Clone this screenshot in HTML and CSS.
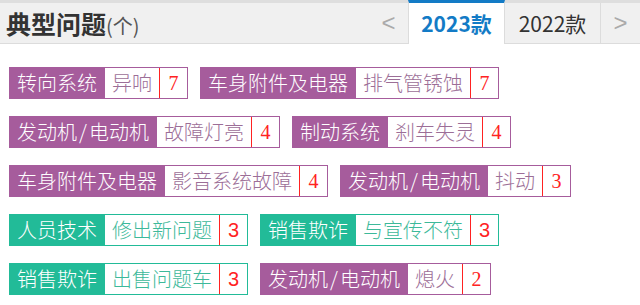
FILE: index.html
```html
<!DOCTYPE html>
<html lang="zh-CN">
<head>
  <meta charset="UTF-8">
  <title>典型问题</title>
  <meta name="viewport" content="width=device-width, initial-scale=1.0">
  <link rel="stylesheet" href="styles.css">
</head>
<body>
  <div class="hd">
    <h2 class="hd-title">典型问题<span>(个)</span></h2>
    <div class="tabs">
      <a class="arrow" href="#">&lt;</a>
      <a class="tab active" href="#">2023款</a>
      <a class="tab" href="#">2022款</a>
      <a class="arrow" href="#">&gt;</a>
    </div>
  </div>

  <div class="tags">
    <div class="row">
      <a class="tag purple" href="#"><span class="name">转向系统</span><span class="val">异响</span><span class="num">7</span></a>
      <a class="tag purple" href="#"><span class="name">车身附件及电器</span><span class="val">排气管锈蚀</span><span class="num">7</span></a>
    </div>
    <div class="row">
      <a class="tag purple" href="#"><span class="name">发动机<i>/</i>电动机</span><span class="val">故障灯亮</span><span class="num">4</span></a>
      <a class="tag purple" href="#"><span class="name">制动系统</span><span class="val">刹车失灵</span><span class="num">4</span></a>
    </div>
    <div class="row">
      <a class="tag purple" href="#"><span class="name">车身附件及电器</span><span class="val">影音系统故障</span><span class="num">4</span></a>
      <a class="tag purple" href="#"><span class="name">发动机<i>/</i>电动机</span><span class="val">抖动</span><span class="num">3</span></a>
    </div>
    <div class="row">
      <a class="tag green" href="#"><span class="name">人员技术</span><span class="val">修出新问题</span><span class="num">3</span></a>
      <a class="tag green" href="#"><span class="name">销售欺诈</span><span class="val">与宣传不符</span><span class="num">3</span></a>
    </div>
    <div class="row">
      <a class="tag green" href="#"><span class="name">销售欺诈</span><span class="val">出售问题车</span><span class="num">3</span></a>
      <a class="tag purple" href="#"><span class="name">发动机<i>/</i>电动机</span><span class="val">熄火</span><span class="num">2</span></a>
    </div>
  </div>
</body>
</html>
```

FILE: styles.css
```css
body {
  margin: 0;
  padding: 0;
  background-color: #fff;
  font-family: "Noto Sans CJK SC", "Liberation Sans", sans-serif;
  color: #333;
}

a {
  text-decoration: none;
}

.hd {
  display: flex;
  align-items: stretch;
  height: 40px;
  border-top: 3px solid #dedede;
  border-bottom: 1px solid #dcdcdc;
  background-color: #f0f0f0;
}

.hd-title {
  margin: 0;
  padding-left: 6px;
  font-size: 25px;
  font-weight: bold;
  line-height: 40px;
  color: #333;
}

.hd-title span {
  font-size: 20px;
  font-weight: normal;
  color: #555;
}

.tabs {
  display: flex;
  margin-left: auto;
}

.arrow {
  width: 39px;
  font-family: "Liberation Sans", sans-serif;
  font-size: 24px;
  line-height: 40px;
  text-align: center;
  color: #aaa;
}

.tab {
  width: 95px;
  border-right: 1px solid #dcdcdc;
  font-size: 21px;
  line-height: 40px;
  text-align: center;
  color: #333;
}

.tab.active {
  position: relative;
  margin-top: -3px;
  margin-bottom: -1px;
  border-top: 3px solid #137bc6;
  border-left: 1px solid #dcdcdc;
  background-color: #fff;
  line-height: 41px;
  font-weight: bold;
  color: #137bc6;
}

.tags {
  padding: 23px 0 0 9px;
  display: flex;
  flex-direction: column;
  gap: 17px;
}

.row {
  display: flex;
  gap: 12px;
}

.tag {
  display: flex;
  height: 32px;
  box-sizing: border-box;
  border: 1px solid;
  font-size: 20px;
  font-weight: 300;
  line-height: 30px;
  background-color: #fff;
}

.tag .name {
  padding: 0 8px 0 7px;
  color: #fff;
}

.tag .name i {
  font-style: normal;
  padding: 0 2px;
}

.tag .val {
  padding: 0 7px;
}

.tag .num {
  width: 27px;
  border-left: 1px solid;
  text-align: center;
  font-family: "Liberation Serif", serif;
  font-weight: normal;
  color: #f22;
}

.purple {
  border-color: #a65c9c;
}

.purple .name {
  background-color: #a65c9c;
}

.purple .val {
  color: #9c6e97;
}

.green {
  border-color: #22bb98;
}

.green .name {
  background-color: #22bb98;
}

.green .val {
  color: #3db99a;
}

.green .num {
  font-family: "Liberation Sans", sans-serif;
}
```
